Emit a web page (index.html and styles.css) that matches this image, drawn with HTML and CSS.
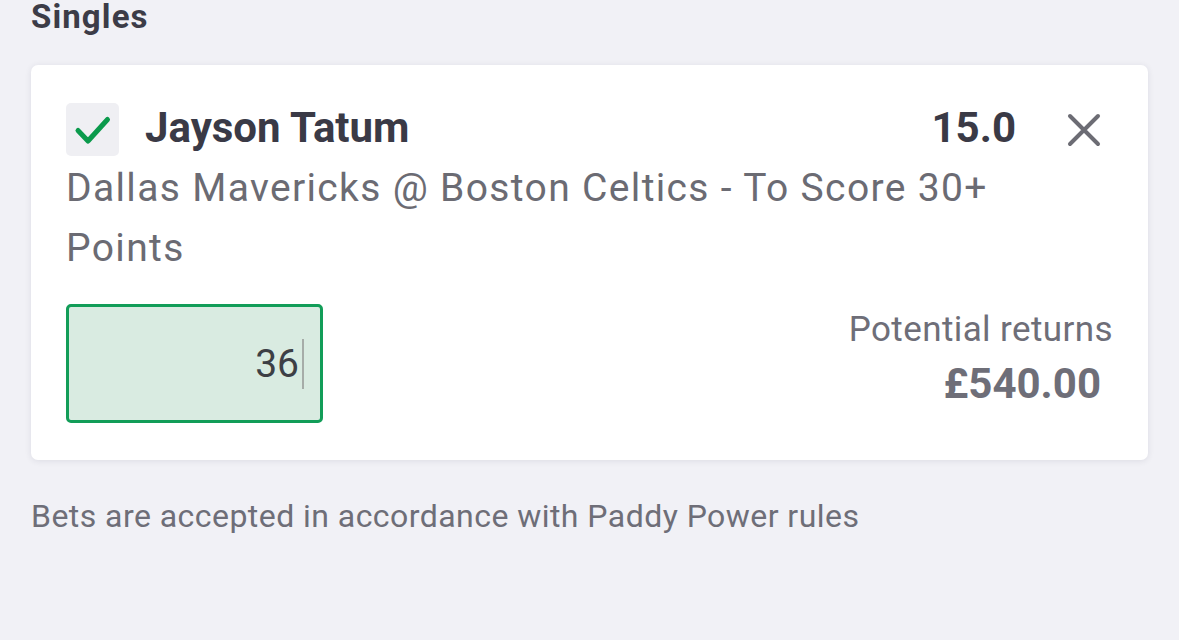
FILE: index.html
```html
<!DOCTYPE html>
<html lang="en">
<head>
<meta charset="utf-8">
<title>Singles</title>
<link rel="stylesheet" href="styles.css">
</head>
<body>
<main class="page">
  <h2 class="section-title">Singles</h2>
  <section class="bet-card">
    <div class="bet-head">
      <span class="checkbox">
        <svg viewBox="0 0 53 53" width="53" height="53" aria-hidden="true"><path d="M12 27.5L22 38L41.5 16.5" fill="none" stroke="#0b9a4c" stroke-width="5" stroke-linecap="round" stroke-linejoin="round"/></svg>
      </span>
      <span class="runner">Jayson Tatum</span>
      <span class="odds">15.0</span>
      <span class="close">
        <svg viewBox="0 0 34 34" width="34" height="34" aria-hidden="true"><path d="M3 3L31 31M31 3L3 31" stroke="#6c6c74" stroke-width="4" stroke-linecap="round"/></svg>
      </span>
    </div>
    <p class="market">Dallas Mavericks @ Boston Celtics - To Score 30+ Points</p>
    <div class="bet-foot">
      <div class="stake"><span class="stake-value">36</span><span class="caret"></span></div>
      <div class="returns">
        <div class="returns-label">Potential returns</div>
        <div class="returns-value">£540.00</div>
      </div>
    </div>
  </section>
  <p class="terms">Bets are accepted in accordance with Paddy Power rules</p>
</main>
</body>
</html>
```
FILE: styles.css
```css
html, body {
  margin: 0;
  padding: 0;
  background: #f1f1f6;
  font-family: Roboto, "Noto Sans", Arial, sans-serif;
}
.page {
  padding: 0 31px 0 31px;
  width: 1117px;
}
.section-title {
  margin: 0;
  font-size: 33px;
  letter-spacing: 1.1px;
  line-height: 34px;
  font-weight: 700;
  color: #3c3c47;
}
.bet-card {
  margin-top: 31px;
  background: #fff;
  border-radius: 7px;
  box-shadow: 0 1px 6px rgba(40, 40, 70, 0.10);
  padding: 38px 35px 37px 35px;
}
.bet-head {
  display: flex;
  align-items: center;
  height: 53px;
}
.checkbox {
  width: 53px;
  height: 53px;
  border-radius: 5px;
  background: #efeff3;
  display: flex;
  flex: none;
}
.runner {
  margin-left: 26px;
  font-size: 42px;
  font-weight: 700;
  color: #3a3a46;
  flex: 1;
  line-height: 50px;
  margin-top: -4px;
}
.odds {
  font-size: 42px;
  font-weight: 700;
  color: #3a3a46;
  line-height: 50px;
  margin-top: -4px;
}
.close {
  margin-left: 51px;
  margin-right: 12px;
  display: flex;
}
.market {
  margin: 2px 0 0 0;
  width: 1000px;
  font-size: 39px;
  letter-spacing: 1.35px;
  line-height: 60px;
  color: #6b6b73;
}
.bet-foot {
  margin-top: 26px;
  display: flex;
  justify-content: space-between;
  align-items: flex-start;
}
.stake {
  height: 113px;
  width: 235px;
  border: 3px solid #129d58;
  border-radius: 5px;
  background: #d9ebe1;
  display: flex;
  align-items: center;
  justify-content: flex-end;
  padding-right: 16px;
}
.stake-value {
  font-size: 39px;
  color: #3d3f45;
  line-height: 44px;
}
.caret {
  width: 2px;
  height: 50px;
  background: #a6aca8;
  margin-left: 3px;
}
.returns {
  text-align: right;
  padding-top: 4px;
}
.returns-label {
  font-size: 35px;
  letter-spacing: 0.4px;
  line-height: 44px;
  color: #6e6e78;
}
.returns-value {
  margin-top: 6px;
  font-size: 42px;
  line-height: 52px;
  font-weight: 700;
  color: #6e6e78;
  padding-right: 12px;
}
.terms {
  margin: 36px 0 0 0;
  font-size: 32px;
  letter-spacing: 0.45px;
  line-height: 40px;
  color: #6e6e78;
}
```
